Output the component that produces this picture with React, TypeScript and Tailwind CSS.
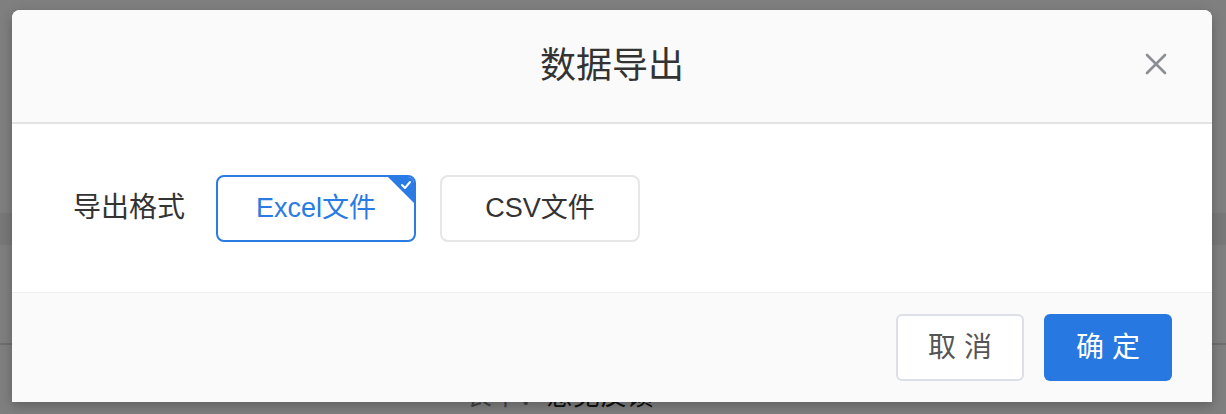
import React from 'react';

const font = "font-['Helvetica_Neue','Liberation_Sans','Noto_Sans_CJK_SC',sans-serif]";

function FormatOption({ label, active, onClick }: { label: string; active: boolean; onClick: () => void }) {
  return (
    <button
      onClick={onClick}
      className={`relative w-[200px] h-[67px] rounded-[8px] border-2 overflow-hidden text-[27px] leading-none ${
        active ? 'border-[#2a7be3] text-[#2a7be3]' : 'border-[#e6e6e6] text-[#333]'
      }`}
    >
      {label}
      {active && (
        <>
          <span className="absolute top-0 right-0 w-0 h-0 border-l-[26px] border-l-transparent border-t-[26px] border-t-[#2a7be3]" />
          <svg className="absolute top-[3px] right-[2px]" width="12" height="10" viewBox="0 0 12 10" fill="none" stroke="white" strokeWidth="2" strokeLinecap="round" strokeLinejoin="round">
            <path d="M2 5 L5 8 L10 2" />
          </svg>
        </>
      )}
    </button>
  );
}

export default function App() {
  const [format, setFormat] = React.useState<'excel' | 'csv'>('excel');

  return (
    <div className={`relative w-[1226px] h-[414px] overflow-hidden bg-white ${font}`}>
      {/* page behind the dialog */}
      <div className="flex flex-col">
        <div className="h-[213px]" />
        <div className="h-[32px] bg-[#f0f0f0]" />
        <div className="h-[98px]" />
        <div className="h-[2px] bg-[#dcdcdc]" />
        <div className="pl-[465px] pt-[38px] text-[27px] leading-none">
          <span className="text-[#888]">表单：</span>
          <span className="text-[#222]">意见反馈</span>
        </div>
      </div>

      {/* mask */}
      <div className="absolute inset-0 bg-black/50" />

      {/* dialog */}
      <div className="absolute left-[12px] top-[10px] w-[1200px] h-[392px] flex flex-col bg-white rounded-t-[8px] shadow-[0_4px_12px_rgba(0,0,0,0.25)] overflow-hidden">
        <div className="relative h-[114px] flex items-center justify-center bg-[#fafafa] border-b-2 border-[#e3e3e3]">
          <h2 className="text-[36px] text-[#333] leading-none">数据导出</h2>
          <button className="absolute right-[44px] top-[42px] w-[24px] h-[24px] flex items-center justify-center">
            <svg width="22" height="22" viewBox="0 0 22 22" fill="none" stroke="#8b8e93" strokeWidth="2.6" strokeLinecap="round">
              <path d="M2 2 L20 20 M20 2 L2 20" />
            </svg>
          </button>
        </div>

        <div className="h-[169px] flex items-center pl-[61px] bg-white border-b border-[#eeeeee]">
          <span className="text-[28px] text-[#333] leading-none mr-[31px]">导出格式</span>
          <div className="flex gap-[24px]">
            <FormatOption label="Excel文件" active={format === 'excel'} onClick={() => setFormat('excel')} />
            <FormatOption label="CSV文件" active={format === 'csv'} onClick={() => setFormat('csv')} />
          </div>
        </div>

        <div className="flex-1 flex items-center justify-end gap-[20px] pr-[40px] bg-[#fafafa]">
          <button className="w-[128px] h-[67px] rounded-[6px] border-2 border-[#dcdfe6] bg-white text-[28px] text-[#555] leading-none">
            取 消
          </button>
          <button className="w-[128px] h-[67px] rounded-[6px] bg-[#2878e1] text-[28px] text-white leading-none">
            确 定
          </button>
        </div>
      </div>
    </div>
  );
}
